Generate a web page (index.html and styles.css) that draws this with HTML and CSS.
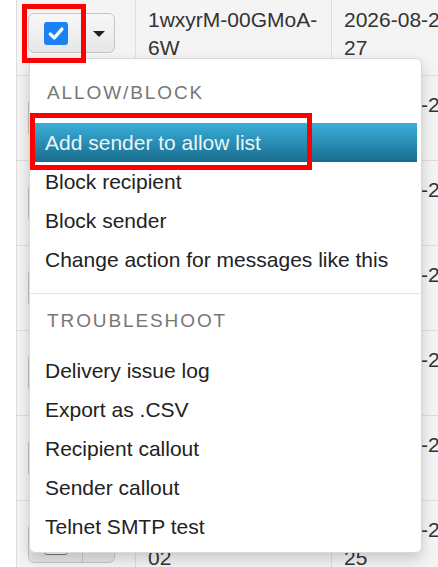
FILE: index.html
```html
<!DOCTYPE html>
<html lang="en">
<head>
<meta charset="utf-8">
<title>Message actions</title>
<link rel="stylesheet" href="styles.css">
</head>
<body>
<div class="page">
  <div class="table">
    <div class="row">
      <div class="cell cell-select">
        <div class="btn-group">
          <span class="btn btn-check"><span class="checkbox"><svg viewBox="0 0 24 24" width="24" height="23"><path d="M6 12.5 L10.2 16.6 L18.2 7.4" fill="none" stroke="#fff" stroke-width="3.4" stroke-linecap="round" stroke-linejoin="round"/></svg></span></span>
          <span class="btn btn-caret"><span class="caret"></span></span>
        </div>
      </div>
      <div class="cell cell-id">1wxyrM-00GMoA-6W</div>
      <div class="cell cell-date"><span class="line">2026-08-27 09:41:</span><span class="line">27</span></div>
    </div>
    <div class="row">
      <div class="cell cell-select">
        <div class="btn-group">
          <span class="btn btn-check"><span class="checkbox off"></span></span>
          <span class="btn btn-caret"><span class="caret"></span></span>
        </div>
      </div>
      <div class="cell cell-id">1wxyqZ-00GLxT-3K</div>
      <div class="cell cell-date"><span class="line">2026-08-27 09:38:</span><span class="line">14</span></div>
    </div>
    <div class="row">
      <div class="cell cell-select">
        <div class="btn-group">
          <span class="btn btn-check"><span class="checkbox off"></span></span>
          <span class="btn btn-caret"><span class="caret"></span></span>
        </div>
      </div>
      <div class="cell cell-id">1wxypQ-00GKrB-9F</div>
      <div class="cell cell-date"><span class="line">2026-08-27 09:31:</span><span class="line">52</span></div>
    </div>
    <div class="row">
      <div class="cell cell-select">
        <div class="btn-group">
          <span class="btn btn-check"><span class="checkbox off"></span></span>
          <span class="btn btn-caret"><span class="caret"></span></span>
        </div>
      </div>
      <div class="cell cell-id">1wxyoH-00GJmC-1A</div>
      <div class="cell cell-date"><span class="line">2026-08-27 09:22:</span><span class="line">08</span></div>
    </div>
    <div class="row">
      <div class="cell cell-select">
        <div class="btn-group">
          <span class="btn btn-check"><span class="checkbox off"></span></span>
          <span class="btn btn-caret"><span class="caret"></span></span>
        </div>
      </div>
      <div class="cell cell-id">1wxynD-00GIkE-7P</div>
      <div class="cell cell-date"><span class="line">2026-08-27 09:15:</span><span class="line">33</span></div>
    </div>
    <div class="row">
      <div class="cell cell-select">
        <div class="btn-group">
          <span class="btn btn-check"><span class="checkbox off"></span></span>
          <span class="btn btn-caret"><span class="caret"></span></span>
        </div>
      </div>
      <div class="cell cell-id">1wxymW-00GHjF-5S</div>
      <div class="cell cell-date"><span class="line">2026-08-27 09:07:</span><span class="line">41</span></div>
    </div>
    <div class="row">
      <div class="cell cell-select">
        <div class="btn-group">
          <span class="btn btn-check"><span class="checkbox off"></span></span>
          <span class="btn btn-caret"><span class="caret"></span></span>
        </div>
      </div>
      <div class="cell cell-id">1wxylR-00GGhN-02</div>
      <div class="cell cell-date"><span class="line">2026-08-27 08:59:</span><span class="line">25</span></div>
    </div>
  </div>

  <div class="menu">
    <div class="menu-header">ALLOW/BLOCK</div>
    <div class="menu-item active">Add sender to allow list</div>
    <div class="menu-item">Block recipient</div>
    <div class="menu-item">Block sender</div>
    <div class="menu-item">Change action for messages like this</div>
    <div class="menu-divider"></div>
    <div class="menu-header">TROUBLESHOOT</div>
    <div class="menu-item">Delivery issue log</div>
    <div class="menu-item">Export as .CSV</div>
    <div class="menu-item">Recipient callout</div>
    <div class="menu-item">Sender callout</div>
    <div class="menu-item">Telnet SMTP test</div>
  </div>

  <div class="mark mark-check"></div>
  <div class="mark mark-item"></div>
</div>
</body>
</html>
```

FILE: styles.css
```css
html, body {
  margin: 0;
  padding: 0;
  background: #ffffff;
}

body {
  font-family: "Liberation Sans", Arial, sans-serif;
  color: #333333;
  overflow: hidden;
}

.page {
  position: relative;
  width: 438px;
  height: 567px;
  overflow: hidden;
}

.table {
  margin-top: -9px;
  margin-left: 16px;
  border-left: 1px solid #dddddd;
  background: #f4f4f4;
  width: 600px;
}

.row {
  display: grid;
  grid-template-columns: 119px 196px 1fr;
  height: 85px;
  box-sizing: border-box;
  border-bottom: 1px solid #dddddd;
}

.cell {
  box-sizing: border-box;
  border-right: 1px solid #dddddd;
  font-size: 21px;
  line-height: 28px;
  padding: 15px 12px 0 12px;
}

.cell-select {
  padding: 22px 0 0 11px;
}

.cell-date {
  border-right: none;
  white-space: nowrap;
}

.cell-date .line {
  display: block;
}

.btn-group {
  display: flex;
  height: 40px;
}

.btn {
  box-sizing: border-box;
  height: 40px;
  display: flex;
  align-items: center;
  justify-content: center;
  border: 1px solid #c6c6c6;
  background: linear-gradient(#f8f8f8, #e6e6e6);
}

.btn-check {
  width: 55px;
  border-radius: 6px 0 0 6px;
}

.btn-caret {
  width: 33px;
  margin-left: -1px;
  border-radius: 0 6px 6px 0;
}

.checkbox {
  width: 24px;
  height: 23px;
  border-radius: 3px;
  background: #1a82f5;
  display: flex;
}

.checkbox.off {
  background: #ffffff;
  border: 1px solid #767676;
  box-sizing: border-box;
}

.caret {
  width: 0;
  height: 0;
  border-top: 6px solid #222222;
  border-left: 6px solid transparent;
  border-right: 6px solid transparent;
  margin-top: 1px;
}

.menu {
  position: absolute;
  left: 29px;
  top: 58px;
  width: 393px;
  box-sizing: border-box;
  background: #ffffff;
  border: 1px solid rgba(0, 0, 0, 0.15);
  border-radius: 6px;
  box-shadow: 0 6px 14px rgba(0, 0, 0, 0.18);
  padding: 7px 4px 6px 4px;
}

.menu-header {
  font-size: 19px;
  line-height: 27px;
  letter-spacing: 1.9px;
  color: #777777;
  padding: 13px 11px 17px 13px;
}

.menu-item {
  font-size: 21px;
  line-height: 39px;
  height: 39px;
  padding: 0 11px;
  color: #222222;
  white-space: nowrap;
}

.menu-item.active {
  background: linear-gradient(#3bafd9, #186c8d);
  color: #e9f5f9;
}

.menu-divider {
  height: 1px;
  background: #e5e5e5;
  margin: 14px -4px 0 -4px;
}

.mark {
  position: absolute;
  box-sizing: border-box;
  border: 5px solid #ff0000;
}

.mark-check {
  left: 22px;
  top: 4px;
  width: 64px;
  height: 59px;
}

.mark-item {
  left: 30px;
  top: 113px;
  width: 282px;
  height: 57px;
}
```
